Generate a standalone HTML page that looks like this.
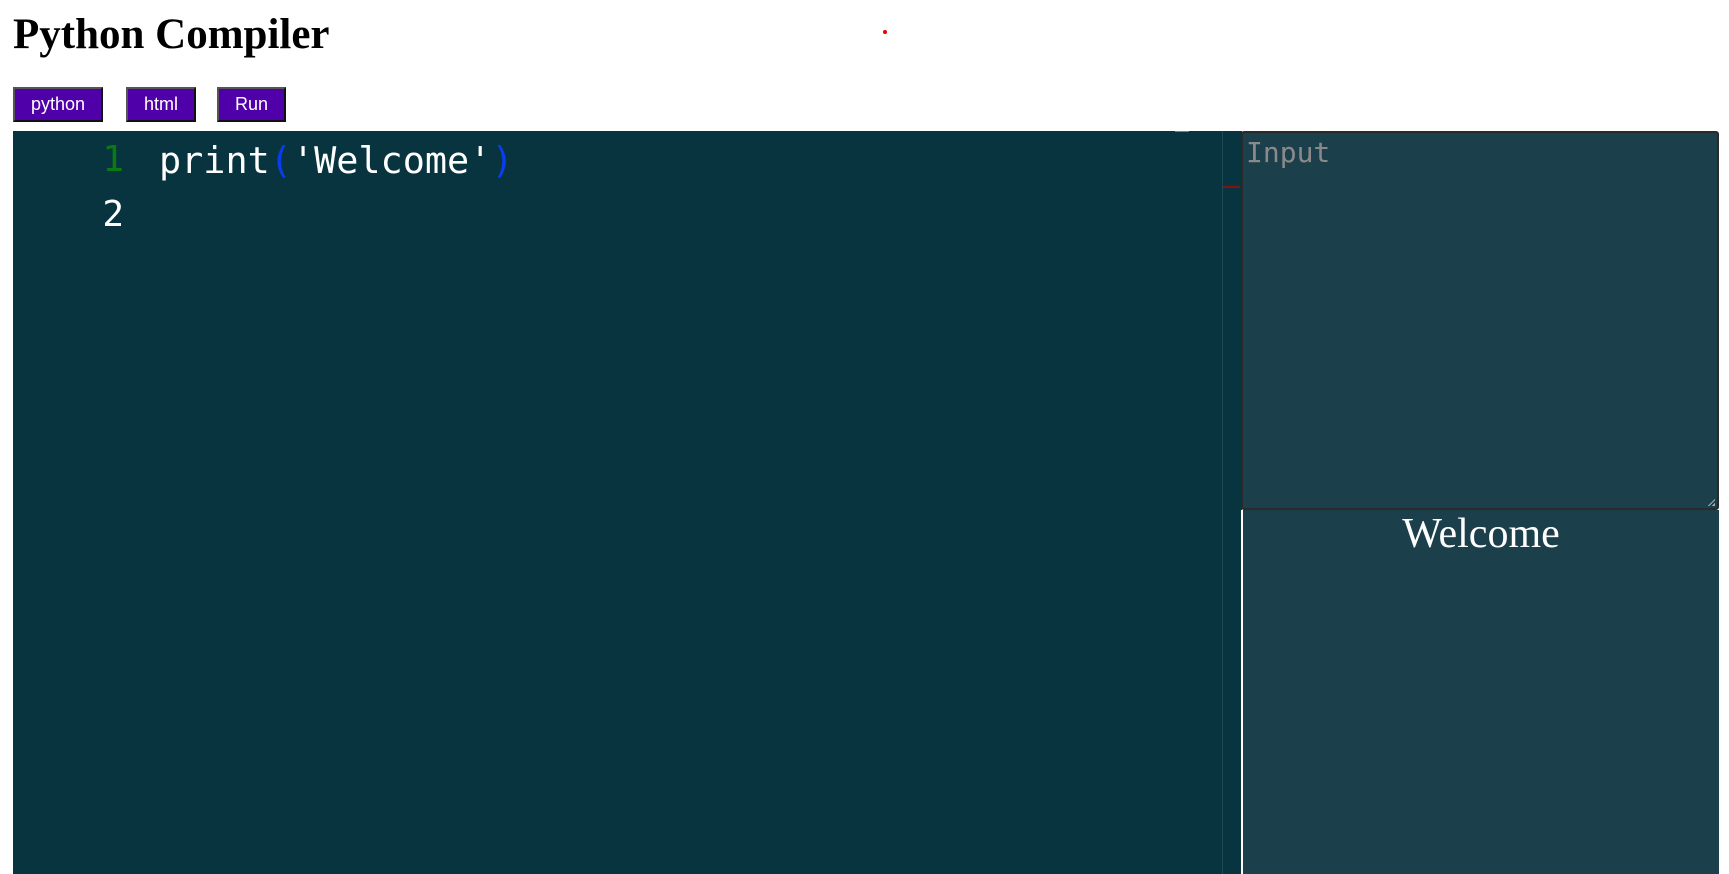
<!DOCTYPE html>
<html><head><meta charset="utf-8"><style>
body{margin:0;background:#fff;width:1729px;height:874px;overflow:hidden;position:relative;font-family:"Liberation Serif",serif}
h1{position:absolute;left:13px;top:5px;margin:0;font-size:43px;font-weight:bold;line-height:60px}
.btn{position:absolute;top:87px;height:35px;box-sizing:border-box;background:#5000a8;color:#fff;border:2px solid;border-color:#555 #111 #111 #555;font:18px "Liberation Sans",sans-serif;text-align:center;line-height:31px}
#ed{position:absolute;left:13px;top:131px;width:1229px;height:743px;background:#08343f}
.ln{position:absolute;left:79px;width:32px;text-align:right;font:36px "DejaVu Sans Mono",monospace;color:#fff}
.code{position:absolute;left:146px;font:36.8px "DejaVu Sans Mono",monospace;color:#fff;white-space:pre}
#ta{position:absolute;left:1241px;top:131px;width:478px;height:379px;box-sizing:border-box;background:#1b3f4b;border:2px solid #2a2a2a;border-radius:3px}
#out{position:absolute;left:1241px;top:510px;width:478px;height:364px;box-sizing:border-box;background:#1b3f4b;border-left:2px solid #fff;color:#fff;text-align:center;font-size:42px;line-height:48px}
</style></head><body>
<h1>Python Compiler</h1>
<div style="position:absolute;left:883px;top:30px;width:4px;height:4px;border-radius:2px;background:#e00"></div>
<div class="btn" style="left:13px;width:90px">python</div>
<div class="btn" style="left:126px;width:70px">html</div>
<div class="btn" style="left:217px;width:69px">Run</div>
<div id="ed">
<div class="ln" style="top:8px;color:#0a7a14">1</div>
<div class="code" style="top:8px">print<span style="color:#0a3cf0">(</span>'Welcome'<span style="color:#0a3cf0">)</span></div>
<div class="ln" style="top:63px">2</div>
<div style="position:absolute;left:1209px;top:0;width:1px;height:743px;background:#1e4a56"></div>
<div style="position:absolute;left:1210px;top:55px;width:17px;height:2px;background:#8a1010"></div>
<div style="position:absolute;left:1162px;top:0;width:14px;height:1px;background:#6a8890"></div>
</div>
<div id="ta"><div style="position:absolute;left:3px;top:3px;font:28px 'DejaVu Sans Mono',monospace;color:#8a8a8a">Input</div>
<div style="position:absolute;right:2px;bottom:2px;width:8px;height:8px;background:linear-gradient(135deg,transparent 55%,#aaa 55%,#aaa 65%,transparent 65%,transparent 80%,#aaa 80%)"></div></div>
<div id="out">Welcome</div>
</body></html>
